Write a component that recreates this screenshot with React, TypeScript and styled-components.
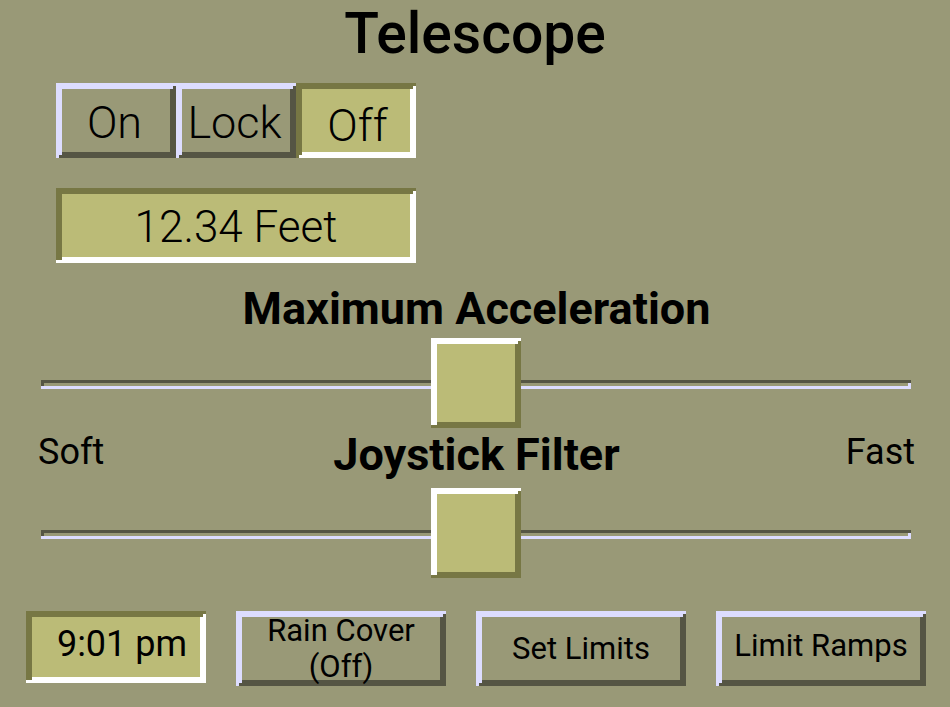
import React, { useState } from "react";
import styled, { createGlobalStyle, css } from "styled-components";

const color = {
  page: "#999977",
  light: "#ddddff",
  dark: "#555544",
  khaki: "#bbbb77",
  khakiDark: "#777744",
  white: "#ffffff",
};

/* Two 3px rings with stair-stepped corners, top-left edge in one colour and bottom-right in the other. */
const raised = (a: string, b: string) => css`
  box-shadow:
    inset 3px 3px ${a},
    inset -3px -3px ${b},
    inset 6px 6px ${a},
    inset -6px -6px ${b};
`;

/* Same rings, but the bottom edge runs the whole width. */
const framed = (a: string, b: string) => css`
  box-shadow:
    inset 0 3px ${a},
    inset 0 -3px ${b},
    inset 3px 0 ${a},
    inset -3px 0 ${b},
    inset 6px 6px ${a},
    inset -6px -6px ${b};
`;

const GlobalStyle = createGlobalStyle`
  *, *::before, *::after { box-sizing: border-box; }
  body {
    margin: 0;
    background: ${color.page};
    color: #000;
    font-family: Roboto, "Liberation Sans", sans-serif;
  }
`;

const Panel = styled.main`
  display: flex;
  flex-direction: column;
`;

const Title = styled.h1`
  margin: 0 0 16px;
  font-size: 57px;
  font-weight: 500;
  line-height: 67px;
  text-align: center;
`;

const Readouts = styled.section`
  display: flex;
  flex-direction: column;
  gap: 30px;
  width: 360px;
  max-width: 100%;
  margin-left: 56px;
`;

const Segments = styled.div`
  display: grid;
  grid-template-columns: repeat(3, 1fr);
`;

const Segment = styled.button<{ $active: boolean }>`
  height: 75px;
  border: 0;
  padding: ${(p) => (p.$active ? "9px 0 0 3px" : "3px 3px 0 0")};
  background: ${(p) => (p.$active ? color.khaki : color.page)};
  color: inherit;
  font: 300 45px/45px Roboto, "Liberation Sans", sans-serif;
  ${(p) =>
    p.$active
      ? raised(color.khakiDark, color.white)
      : raised(color.light, color.dark)}
`;

const Readout = styled.output`
  display: flex;
  align-items: center;
  justify-content: center;
  height: 75px;
  padding-top: 3px;
  background: ${color.khaki};
  font-size: 44px;
  font-weight: 300;
  ${framed(color.khakiDark, color.white)}
`;

const Sliders = styled.section`
  margin-top: 15px;
`;

const Heading = styled.label`
  display: block;
  font-size: 45px;
  font-weight: 700;
  line-height: 45px;
  text-align: center;
`;

const HeadingRow = styled.div`
  display: grid;
  grid-template-columns: 1fr auto 1fr;
  align-items: center;
  height: 60px;
  padding: 0 35px 0 38px;
`;

const ScaleRow = styled(HeadingRow)`
  padding-bottom: 8px;
`;

const HeadingCell = styled.div`
  grid-column: 2;
`;

const ScaleEnd = styled.span<{ $end?: boolean }>`
  padding-bottom: 4px;
  font-size: 36px;
  line-height: 36px;
  text-align: ${(p) => (p.$end ? "right" : "left")};
`;

const SliderBox = styled.div`
  display: flex;
  padding: 0 39px 0 41px;
`;

const thumb = css`
  width: 90px;
  height: 90px;
  border: 0;
  border-radius: 0;
  background: ${color.khaki};
  ${framed(color.white, color.khakiDark)}
`;

const Slider = styled.input`
  appearance: none;
  width: 100%;
  height: 90px;
  margin: 0;
  background:
    linear-gradient(${color.dark}, ${color.dark}) 0 42px / 100% 3px no-repeat,
    linear-gradient(${color.light}, ${color.light}) 0 48px / 100% 3px no-repeat,
    linear-gradient(${color.dark}, ${color.dark}) 0 45px / 3px 3px no-repeat,
    linear-gradient(${color.light}, ${color.light}) 100% 45px / 3px 3px no-repeat;

  &::-webkit-slider-runnable-track {
    height: 90px;
    background: transparent;
  }
  &::-webkit-slider-thumb {
    appearance: none;
    ${thumb}
  }
  &::-moz-range-thumb {
    ${thumb}
  }
`;

const Footer = styled.footer`
  display: grid;
  grid-template-columns: 6fr 7fr 7fr 7fr;
  align-items: start;
  gap: 30px;
  margin-top: 33px;
  padding: 0 24px 0 26px;
`;

const Clock = styled(Readout)`
  height: 72px;
  padding: 0 0 6px 12px;
  font-size: 36px;
  font-weight: 400;
`;

const Action = styled.button<{ $lifted?: boolean }>`
  height: 75px;
  border: 0;
  padding: ${(p) => (p.$lifted ? "0 0 6px" : "0")};
  background: ${color.page};
  color: inherit;
  font: 400 31px/36px Roboto, "Liberation Sans", sans-serif;
  ${raised(color.light, color.dark)}
`;

const modes = ["On", "Lock", "Off"];

export default function App() {
  const [mode, setMode] = useState("Off");

  return (
    <>
      <GlobalStyle />
      <Panel>
        <Title>Telescope</Title>
        <Readouts>
          <Segments role="group" aria-label="Telescope drive">
            {modes.map((m) => (
              <Segment
                key={m}
                type="button"
                $active={m === mode}
                aria-pressed={m === mode}
                onClick={() => setMode(m)}
              >
                {m}
              </Segment>
            ))}
          </Segments>
          <Readout>12.34 Feet</Readout>
        </Readouts>
        <Sliders>
          <HeadingRow>
            <HeadingCell>
              <Heading htmlFor="acceleration">Maximum Acceleration</Heading>
            </HeadingCell>
          </HeadingRow>
          <SliderBox>
            <Slider id="acceleration" type="range" defaultValue={50} />
          </SliderBox>
          <ScaleRow>
            <ScaleEnd>Soft</ScaleEnd>
            <Heading htmlFor="joystick">Joystick Filter</Heading>
            <ScaleEnd $end>Fast</ScaleEnd>
          </ScaleRow>
          <SliderBox>
            <Slider id="joystick" type="range" defaultValue={50} />
          </SliderBox>
        </Sliders>
        <Footer>
          <Clock>9:01 pm</Clock>
          <Action type="button">
            Rain Cover
            <br />
            (Off)
          </Action>
          <Action type="button">Set Limits</Action>
          <Action type="button" $lifted>
            Limit Ramps
          </Action>
        </Footer>
      </Panel>
    </>
  );
}
